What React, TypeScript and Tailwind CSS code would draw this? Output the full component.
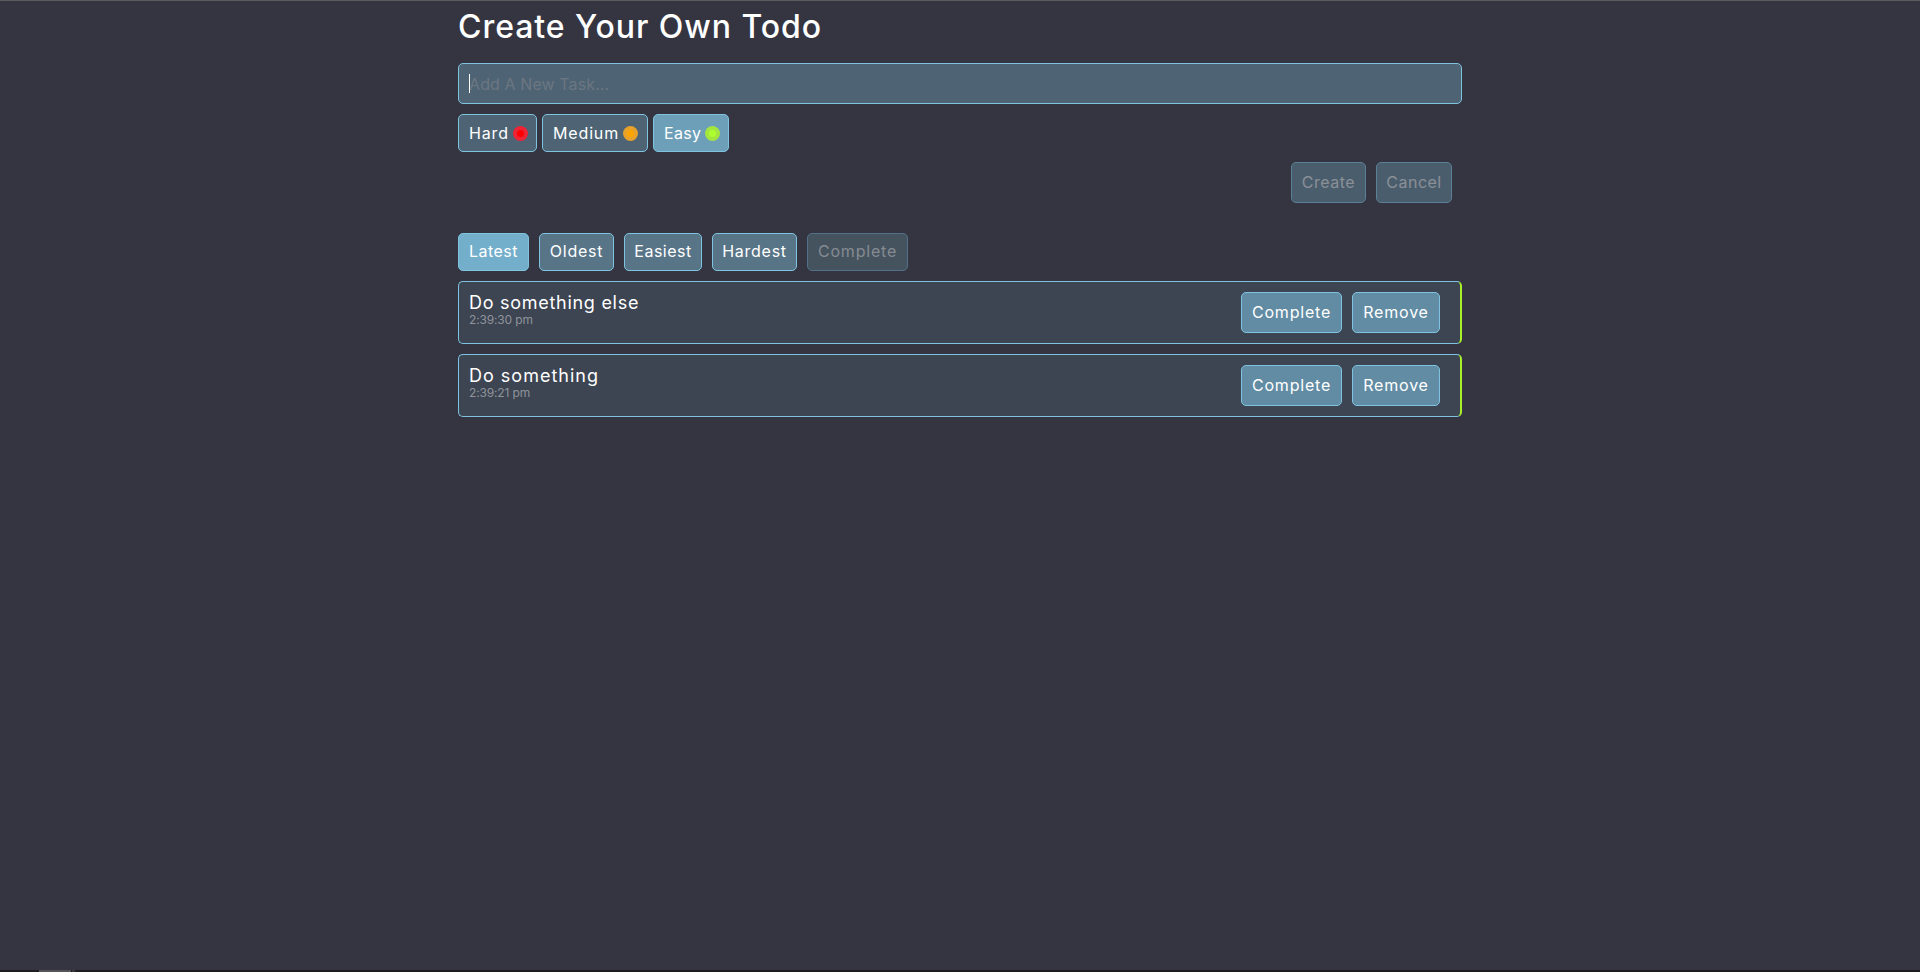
const font = "[font-family:Inter,'Liberation_Sans',sans-serif]";

const btn = "flex h-[38px] items-center justify-center rounded-[5px] border border-[#7ec4e0] pb-[2px] text-[16px] text-white";
const diffBtn = "flex h-[38px] items-center rounded-[5px] border border-[#7ec4e0] pb-[1px] pl-[10px] text-[16px] text-white";
const actionBtn = "flex h-[41px] items-center justify-center rounded-[5px] border border-[#7ec4e0] bg-[#628ca3] pb-[2px] text-[16px] tracking-[0.8px] text-white";
const mutedBtn = "flex h-[41px] items-center justify-center rounded-[5px] border border-[#5b7f95] bg-[#4a5d6d] pb-[2px] text-[16px] tracking-[0.5px] text-[#8b9097]";

function Dot({ outer, inner }: { outer: string; inner: string }) {
  return (
    <span className={`ml-[4px] mt-[1px] flex h-[15px] w-[15px] items-center justify-center rounded-full ${outer}`}>
      <span className={`h-[7px] w-[7px] rounded-full ${inner}`} />
    </span>
  );
}

function TodoItem({ title, time, spacing }: { title: string; time: string; spacing: string }) {
  return (
    <div className="flex h-[63px] items-start justify-between rounded-[5px] border border-[#7ec4e0] border-r-2 border-r-[#a8f02a] bg-[#3d4452] pl-[10px] pr-[20px] pt-[10px]">
      <div className="pt-[1px]">
        <div className={`text-[18px] leading-[20px] text-white ${spacing}`}>{title}</div>
        <div className="text-[12px] leading-[13px] tracking-[-0.15px] text-[#8f949b]">{time}</div>
      </div>
      <div className="flex gap-[10px]">
        <button className={`${actionBtn} w-[101px]`}>Complete</button>
        <button className={`${actionBtn} w-[88px]`}>Remove</button>
      </div>
    </div>
  );
}

export default function App() {
  return (
    <div className={`flex h-screen flex-col overflow-hidden bg-[#353541] ${font}`}>
      <div className="h-px bg-[#5c5c5c]" />
      <main className="mx-auto flex w-[1004px] flex-1 flex-col">
        <h1 className="h-[62px] pt-[6px] text-[32px] font-medium leading-[40px] tracking-[0.95px] text-white">
          Create Your Own Todo
        </h1>
        <div className="relative h-[41px]">
          <input
            placeholder="Add A New Task..."
            className="h-full w-full rounded-[5px] border border-[#7ec4e0] bg-[#4e6475] px-[10px] text-[16px] tracking-[0.1px] text-white outline-none placeholder:text-[#6c7681]"
          />
          <span className="absolute left-[11px] top-[11px] h-[19px] w-px bg-white" />
        </div>
        <div className="mt-[10px] flex gap-[5px]">
          <button className={`${diffBtn} w-[79px] bg-[#4e6475] tracking-[0.85px]`}>
            Hard
            <Dot outer="bg-[#ee2434]" inner="bg-[#ff0000]" />
          </button>
          <button className={`${diffBtn} w-[106px] bg-[#4e6475] tracking-[0.85px]`}>
            Medium
            <Dot outer="bg-[#e8a12a]" inner="bg-[#ffa500]" />
          </button>
          <button className={`${diffBtn} w-[76px] bg-[#6e9fb8] tracking-[0.3px]`}>
            Easy
            <Dot outer="bg-[#a3e63f]" inner="bg-[#adff2f]" />
          </button>
        </div>
        <div className="mt-[10px] flex justify-end gap-[10px] pr-[10px]">
          <button className={`${mutedBtn} w-[75px]`}>Create</button>
          <button className={`${mutedBtn} w-[76px]`}>Cancel</button>
        </div>
        <div className="mt-[30px] flex gap-[10px]">
          <button className={`${btn} w-[71px] bg-[#73aecb] tracking-[0.45px]`}>Latest</button>
          <button className={`${btn} w-[75px] bg-[#587487] tracking-[0.75px]`}>Oldest</button>
          <button className={`${btn} w-[78px] bg-[#587487] tracking-[0.5px]`}>Easiest</button>
          <button className={`${btn} w-[85px] bg-[#587487] tracking-[0.75px]`}>Hardest</button>
          <button className="flex h-[38px] w-[101px] items-center justify-center rounded-[5px] border border-[#52708a] bg-[#45535f] pb-[2px] text-[16px] tracking-[0.8px] text-[#868b92]">
            Complete
          </button>
        </div>
        <div className="mt-[10px] flex flex-col gap-[10px]">
          <TodoItem title="Do something else" time="2:39:30 pm" spacing="tracking-[0.72px]" />
          <TodoItem title="Do something" time="2:39:21 pm" spacing="tracking-[1px]" />
        </div>
      </main>
      <div className="flex h-[2px] bg-[#1e1e1e] pl-[39px]">
        <div className="w-[32px] bg-[#555555]" />
        <div className="ml-[1px] w-[3px] bg-[#3a3a3a]" />
      </div>
    </div>
  );
}
